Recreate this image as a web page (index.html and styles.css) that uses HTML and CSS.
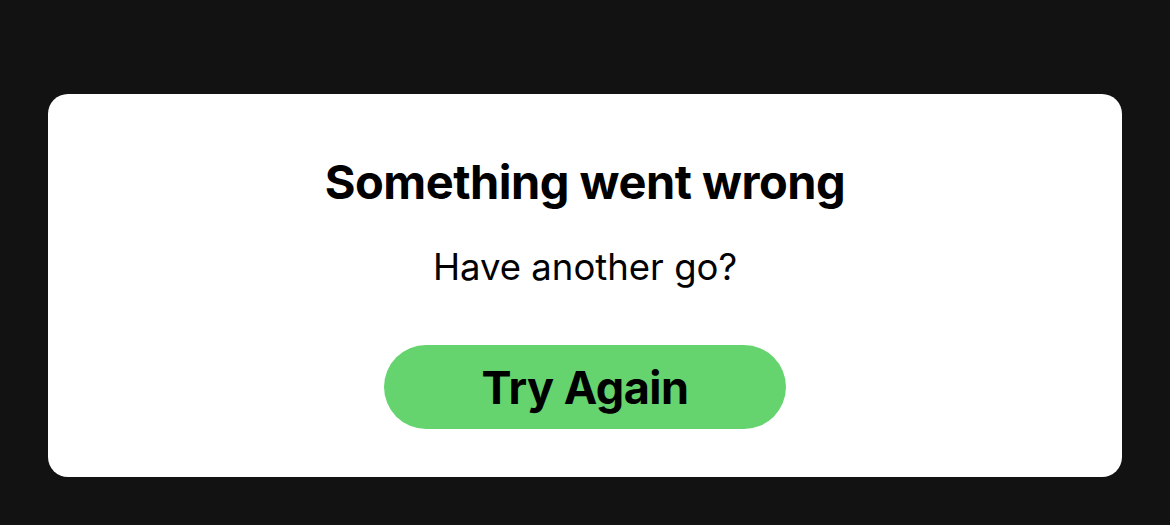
FILE: index.html
```html
<!DOCTYPE html>
<html lang="en">
<head>
<meta charset="utf-8">
<link rel="stylesheet" href="styles.css">
</head>
<body>
<main class="page">
  <section class="card">
    <h1 class="title">Something went wrong</h1>
    <p class="subtitle">Have another go?</p>
    <button class="retry" type="button">Try Again</button>
  </section>
</main>
</body>
</html>
```
FILE: styles.css
```css
html, body {
  margin: 0;
  padding: 0;
  background: #121212;
}
body {
  width: 1170px;
  height: 525px;
  overflow: hidden;
  font-family: "Inter", "Liberation Sans", sans-serif;
}
.page {
  padding: 94px 48px 0;
}
.card {
  background: #ffffff;
  border-radius: 20px;
  height: 383px;
  box-sizing: border-box;
  padding-top: 58px;
  display: flex;
  flex-direction: column;
  align-items: center;
}
.title {
  margin: 0;
  font-size: 47px;
  line-height: 60px;
  font-weight: 700;
  color: #000;
  letter-spacing: -0.5px;
}
.subtitle {
  margin: 34px 0 0;
  font-size: 36.5px;
  line-height: 42px;
  font-weight: 400;
  color: #000;
}
.retry {
  margin-top: 57px;
  width: 402px;
  height: 84px;
  border: none;
  border-radius: 42px;
  background: #65d46e;
  color: #000;
  font-family: inherit;
  font-size: 45px;
  font-weight: 700;
  letter-spacing: -0.5px;
  padding: 0;
  display: flex;
  align-items: center;
  justify-content: center;
}
```
